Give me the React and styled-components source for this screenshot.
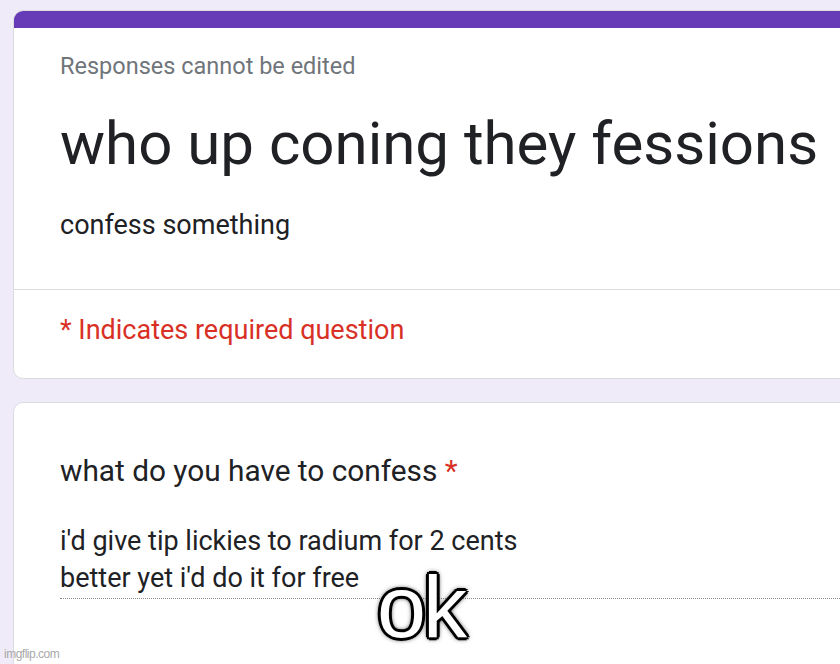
import React from "react";
import styled, { createGlobalStyle } from "styled-components";

const GlobalStyle = createGlobalStyle`
  html, body {
    margin: 0;
    padding: 0;
    background: #f0ebf8;
    overflow: hidden;
    font-family: Roboto, "Liberation Sans", Arial, sans-serif;
  }
`;

const Page = styled.div`
  position: relative;
  width: 840px;
  height: 664px;
  padding: 10px 0 0 13px;
  box-sizing: border-box;
  display: flex;
  flex-direction: column;
  gap: 23px;
`;

const Card = styled.div`
  width: 900px;
  background: #fff;
  border: 1px solid #dadce0;
  border-radius: 10px;
  box-sizing: border-box;
  overflow: hidden;
  flex-shrink: 0;
`;

const TopBar = styled.div`
  height: 18px;
  background: #673ab7;
  margin: -1px -1px 0 -1px;
`;

const Section = styled.div`
  padding: ${(p) => p.$pad};
  border-bottom: ${(p) => (p.$divider ? "1px solid #dadce0" : "none")};
`;

const Note = styled.div`
  font-size: 23.5px;
  line-height: 30px;
  color: #70757a;
`;

const Title = styled.div`
  margin-top: 28px;
  font-size: 60px;
  line-height: 70px;
  color: #202124;
`;

const Description = styled.div`
  margin-top: 29px;
  font-size: 27px;
  line-height: 34px;
  color: #202124;
`;

const Required = styled.div`
  font-size: 27px;
  line-height: 34px;
  color: #d93025;
`;

const Question = styled.div`
  font-size: 29.8px;
  line-height: 38px;
  color: #202124;
`;

const Star = styled.span`
  color: #d93025;
`;

const Answer = styled.div`
  margin-top: 33px;
  width: 800px;
  font-size: 27px;
  line-height: 37px;
  color: #202124;
  padding-bottom: 1px;
  border-bottom: 1px dotted #8a8a8a;
`;

const Caption = styled.div`
  position: absolute;
  left: 377px;
  top: 563px;
  font-family: "Liberation Sans", Arial, sans-serif;
  font-size: 88px;
  line-height: 88px;
  color: #fff;
  letter-spacing: -3px;
  text-shadow:
    2px 2px 0 #000, -2px -2px 0 #000, 2px -2px 0 #000, -2px 2px 0 #000,
    3px 0 0 #000, -3px 0 0 #000, 0 3px 0 #000, 0 -3px 0 #000,
    0 0 5px #000, 0 0 6px #000;
`;

const Watermark = styled.div`
  position: absolute;
  left: 4px;
  bottom: 3px;
  font-family: "Liberation Sans", Arial, sans-serif;
  font-size: 12px;
  letter-spacing: -0.5px;
  color: #a8a8a8;
`;

export default function App() {
  return (
    <>
      <GlobalStyle />
      <Page>
        <Card>
          <TopBar />
          <Section $pad="23px 0 47px 46px" $divider>
            <Note>Responses cannot be edited</Note>
            <Title>who up coning they fessions</Title>
            <Description>confess something</Description>
          </Section>
          <Section $pad="23px 0 31px 46px">
            <Required>* Indicates required question</Required>
          </Section>
        </Card>
        <Card>
          <Section $pad="49px 0 100px 46px">
            <Question>
              what do you have to confess <Star>*</Star>
            </Question>
            <Answer>
              i'd give tip lickies to radium for 2 cents
              <br />
              better yet i'd do it for free
            </Answer>
          </Section>
        </Card>
        <Caption>ok</Caption>
        <Watermark>imgflip.com</Watermark>
      </Page>
    </>
  );
}
